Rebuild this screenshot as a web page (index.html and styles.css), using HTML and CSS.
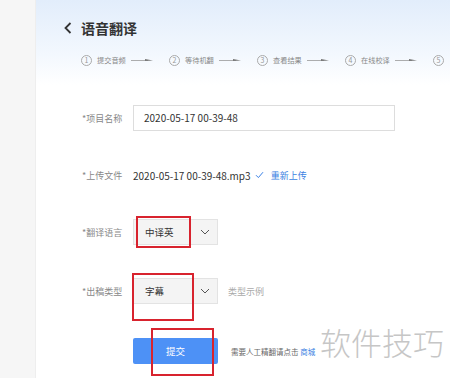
FILE: index.html
```html
<!DOCTYPE html>
<html lang="zh-CN">
<head>
  <meta charset="UTF-8" />
  <meta name="viewport" content="width=device-width, initial-scale=1.0" />
  <title>语音翻译</title>
  <link rel="stylesheet" href="styles.css">
</head>
<body>
  <div class="page">
    <div class="sidebar"></div>

    <div class="main">
      <div class="title-row">
        <svg class="back" width="8" height="12" viewBox="0 0 8 12">
          <path d="M6.5 1 L1.5 6 L6.5 11" fill="none" stroke="#333" stroke-width="1.8" />
        </svg>
        <h2>语音翻译</h2>
      </div>

      <div class="steps">
        <div class="step"><span class="num">1</span><span class="step-text">提交音频</span><svg class="arrow" width="22" height="6" viewBox="0 0 22 6"><line x1="0" y1="3.5" x2="17" y2="3.5" stroke="#999" stroke-width="0.8"/><polygon points="14,2 22,3.6 14,4" fill="#777"/></svg></div>
        <div class="step"><span class="num">2</span><span class="step-text">等待机翻</span><svg class="arrow" width="22" height="6" viewBox="0 0 22 6"><line x1="0" y1="3.5" x2="17" y2="3.5" stroke="#999" stroke-width="0.8"/><polygon points="14,2 22,3.6 14,4" fill="#777"/></svg></div>
        <div class="step"><span class="num">3</span><span class="step-text">查看结果</span><svg class="arrow" width="22" height="6" viewBox="0 0 22 6"><line x1="0" y1="3.5" x2="17" y2="3.5" stroke="#999" stroke-width="0.8"/><polygon points="14,2 22,3.6 14,4" fill="#777"/></svg></div>
        <div class="step"><span class="num">4</span><span class="step-text">在线校译</span><svg class="arrow" width="22" height="6" viewBox="0 0 22 6"><line x1="0" y1="3.5" x2="17" y2="3.5" stroke="#999" stroke-width="0.8"/><polygon points="14,2 22,3.6 14,4" fill="#777"/></svg></div>
        <div class="step"><span class="num">5</span></div>
      </div>

      <div class="form">
        <div class="row">
          <span class="label">*项目名称</span>
          <div class="input">2020-05-17 00-39-48</div>
        </div>

        <div class="row row-file">
          <span class="label">*上传文件</span>
          <span class="file-name">2020-05-17 00-39-48.mp3</span>
          <svg class="check" width="9" height="8" viewBox="0 0 9 8">
            <path d="M1 4.2 L3.4 6.6 L8 1.2" fill="none" stroke="#3b82e6" stroke-width="1" />
          </svg>
          <span class="link">重新上传</span>
        </div>

        <div class="row">
          <span class="label">*翻译语言</span>
          <div class="select">
            <span>中译英</span>
            <svg class="chevron" width="10" height="6" viewBox="0 0 10 6">
              <path d="M1 1 L5 5 L9 1" fill="none" stroke="#555" stroke-width="1" />
            </svg>
            <div class="mark mark-lang"></div>
          </div>
        </div>

        <div class="row">
          <span class="label">*出稿类型</span>
          <div class="select">
            <span>字幕</span>
            <svg class="chevron" width="10" height="6" viewBox="0 0 10 6">
              <path d="M1 1 L5 5 L9 1" fill="none" stroke="#555" stroke-width="1" />
            </svg>
            <div class="mark mark-type"></div>
          </div>
          <span class="hint">类型示例</span>
        </div>

        <div class="row row-submit">
          <div class="button">
            提交
            <div class="mark mark-submit"></div>
          </div>
          <span class="note">需要人工精翻请点击 <span class="link">商城</span></span>
        </div>
      </div>
    </div>

    <div class="watermark">软件技巧</div>
  </div>
</body>
</html>
```

FILE: styles.css
```css
* {
  box-sizing: border-box;
  margin: 0;
  padding: 0;
}

body {
  font-family: "Noto Sans CJK SC", "Noto Sans", sans-serif;
  color: #333;
  background: #fff;
  overflow: hidden;
}

.page {
  position: relative;
  display: flex;
  height: 378px;
  overflow: hidden;
}

.sidebar {
  width: 36px;
  flex-shrink: 0;
  background: #f6f6f6;
  border-right: 1px solid #eee;
}

.main {
  flex: 1;
  min-width: 0;
  overflow: hidden;
  padding: 18px 0 0 28px;
  background: linear-gradient(#e2edfb 0, #f3f8fe 55px, #fff 85px);
}

.title-row {
  display: flex;
  align-items: center;
  gap: 9px;
  height: 20px;
}

.title-row h2 {
  font-size: 14px;
  font-weight: bold;
  color: #333;
}

.steps {
  display: flex;
  margin: 16px 0 0 17px;
  height: 12px;
  white-space: nowrap;
}

.step {
  display: flex;
  align-items: center;
  width: 88px;
  flex-shrink: 0;
  gap: 5px;
}

.step:last-child {
  width: auto;
}

.num {
  width: 11px;
  height: 11px;
  border: 1px solid #aaa;
  border-radius: 50%;
  font-size: 7px;
  line-height: 9px;
  text-align: center;
  color: #999;
}

.step-text {
  font-size: 7.2px;
  color: #888;
}

.form {
  display: flex;
  flex-direction: column;
  gap: 33px;
  margin: 39px 0 0 18px;
}

.row {
  display: flex;
  align-items: center;
  height: 26px;
}

.row-file {
  height: 22px;
}

.label {
  width: 51px;
  font-size: 9px;
  color: #888;
}

.input {
  width: 262px;
  height: 26px;
  border: 1px solid #ddd;
  padding-left: 10px;
  font-size: 10px;
  line-height: 24px;
  color: #333;
}

.file-name {
  font-size: 10px;
  color: #333;
}

.check {
  margin: 0 7px 0 4px;
}

.link {
  color: #3b7fe2;
  font-size: 9px;
}

.select {
  position: relative;
  display: flex;
  align-items: center;
  justify-content: space-between;
  width: 85px;
  height: 26px;
  padding: 0 7px 0 11px;
  background: #f4f4f4;
  border: 1px solid #e3e3e3;
  font-size: 9.5px;
  color: #333;
}

.hint {
  margin-left: 10px;
  font-size: 9px;
  color: #aaa;
}

.row-submit {
  margin-top: 1px;
  padding-left: 51px;
}

.button {
  position: relative;
  width: 85px;
  height: 26px;
  background: #4d91f6;
  border-radius: 2px;
  color: #fff;
  font-size: 9.5px;
  line-height: 26px;
  text-align: center;
}

.note {
  margin-left: 13px;
  font-size: 7.5px;
  color: #666;
}

.note .link {
  font-size: 7.5px;
}

.mark {
  position: absolute;
  border: 2px solid #d8232e;
}

.mark-lang {
  left: 2px;
  top: -4px;
  width: 55px;
  height: 32px;
}

.mark-type {
  left: -2px;
  top: -6px;
  width: 62px;
  height: 48px;
}

.mark-submit {
  left: 18px;
  top: -10px;
  width: 63px;
  height: 48px;
}

.watermark {
  position: absolute;
  left: 318px;
  top: 322px;
  padding: 0 2px;
  background: #fff;
  font-size: 31px;
  font-weight: 300;
  line-height: 40px;
  color: #c6c6c6;
}
```
